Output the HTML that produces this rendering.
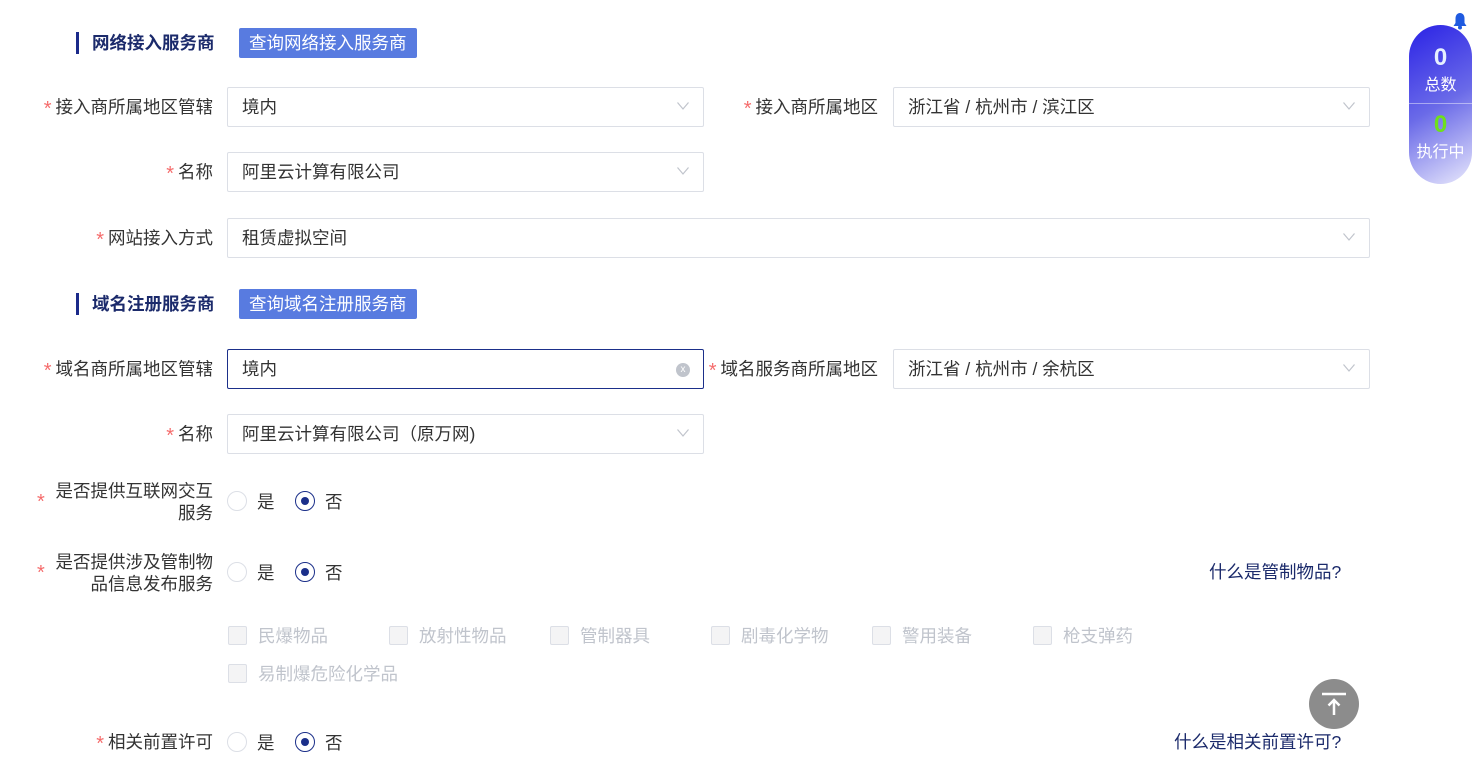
<!DOCTYPE html>
<html><head><meta charset="utf-8"><style>
*{margin:0;padding:0;box-sizing:border-box}
body{width:1475px;height:762px;background:#fff;position:relative;overflow:hidden;font-family:"Liberation Sans","Noto Sans CJK SC",sans-serif;font-size:17.5px;color:#333}
.a{position:absolute;white-space:nowrap}
.lbl{position:absolute;text-align:right;line-height:22px;color:#333}
.s{color:#f56c6c;margin-right:4px;font-size:20px;vertical-align:-2px}
.inp{position:absolute;height:40px;border:1px solid #dcdfe6;border-radius:2px;padding-left:14px;line-height:38px;color:#333}
.inp .ar{position:absolute;right:14px;top:14px;width:12px;height:8px}
.hd{position:absolute;font-weight:bold;color:#1b2a6b;font-size:17.5px;line-height:22px}
.bar{position:absolute;width:3px;height:22px;background:#1b2a8a}
.btn{position:absolute;height:30px;background:#587be0;color:#fff;border-radius:2px;line-height:30px;padding:0 10px;font-size:17.5px}
.r{position:absolute;width:20px;height:20px;border:1px solid #dcdfe6;border-radius:50%}
.r.on{border:1.5px solid #1b2f8a}
.r.on:after{content:"";position:absolute;left:4.5px;top:4.5px;width:8px;height:8px;border-radius:50%;background:#1b2f8a}
.cb{position:absolute;width:19px;height:19px;border:1px solid #dcdfe6;background:#f4f4f5;border-radius:2px}
.ct{position:absolute;color:#c0c4cc;line-height:22px}
.lk{position:absolute;color:#1b2a6b;line-height:22px}
</style></head><body>
<svg width="0" height="0" style="position:absolute"><defs><symbol id="ar" viewBox="0 0 12 8"><path d="M0.5 0.5L6 7L11.5 0.5" fill="none" stroke="#c0c4cc" stroke-width="1.2"/></symbol></defs></svg>

<div class="bar" style="left:76px;top:32px"></div>
<div class="hd" style="left:92px;top:32px">网络接入服务商</div>
<div class="btn" style="left:239px;top:28px">查询网络接入服务商</div>

<div class="lbl" style="left:20px;width:193px;top:96px"><span class="s">*</span>接入商所属地区管辖</div>
<div class="inp" style="left:227px;top:87px;width:477px">境内<svg class="ar"><use href="#ar"/></svg></div>
<div class="lbl" style="left:690px;width:188px;top:96px"><span class="s">*</span>接入商所属地区</div>
<div class="inp" style="left:893px;top:87px;width:477px">浙江省 / 杭州市 / 滨江区<svg class="ar"><use href="#ar"/></svg></div>

<div class="lbl" style="left:20px;width:193px;top:161px"><span class="s">*</span>名称</div>
<div class="inp" style="left:227px;top:152px;width:477px">阿里云计算有限公司<svg class="ar"><use href="#ar"/></svg></div>

<div class="lbl" style="left:20px;width:193px;top:227px"><span class="s">*</span>网站接入方式</div>
<div class="inp" style="left:227px;top:218px;width:1143px">租赁虚拟空间<svg class="ar"><use href="#ar"/></svg></div>

<div class="bar" style="left:76px;top:293px"></div>
<div class="hd" style="left:92px;top:293px">域名注册服务商</div>
<div class="btn" style="left:239px;top:289px">查询域名注册服务商</div>

<div class="lbl" style="left:20px;width:193px;top:358px"><span class="s">*</span>域名商所属地区管辖</div>
<div class="inp" style="left:227px;top:349px;width:477px;border-color:#1b2f8a">境内<span style="position:absolute;right:13px;top:13px;width:14px;height:14px;border-radius:50%;background:#c0c4cc;color:#fff;font-size:10px;line-height:14px;text-align:center">x</span></div>
<div class="lbl" style="left:680px;width:198px;top:358px"><span class="s">*</span>域名服务商所属地区</div>
<div class="inp" style="left:893px;top:349px;width:477px">浙江省 / 杭州市 / 余杭区<svg class="ar"><use href="#ar"/></svg></div>

<div class="lbl" style="left:20px;width:193px;top:423px"><span class="s">*</span>名称</div>
<div class="inp" style="left:227px;top:414px;width:477px">阿里云计算有限公司（原万网)<svg class="ar"><use href="#ar"/></svg></div>

<div class="s a" style="left:37px;top:491px">*</div>
<div class="lbl" style="left:40px;width:173px;top:480px">是否提供互联网交互<br>服务</div>
<div class="r" style="left:227px;top:491px"></div><div class="a" style="left:257px;top:489px">是</div>
<div class="r on" style="left:295px;top:491px"></div><div class="a" style="left:325px;top:489px">否</div>

<div class="s a" style="left:37px;top:562px">*</div>
<div class="lbl" style="left:40px;width:173px;top:551px">是否提供涉及管制物<br>品信息发布服务</div>
<div class="r" style="left:227px;top:562px"></div><div class="a" style="left:257px;top:560px">是</div>
<div class="r on" style="left:295px;top:562px"></div><div class="a" style="left:325px;top:560px">否</div>
<div class="lk" style="left:1209px;top:561px">什么是管制物品?</div>

<div class="cb" style="left:228px;top:626px"></div><div class="ct" style="left:258px;top:625px">民爆物品</div>
<div class="cb" style="left:389px;top:626px"></div><div class="ct" style="left:419px;top:625px">放射性物品</div>
<div class="cb" style="left:550px;top:626px"></div><div class="ct" style="left:580px;top:625px">管制器具</div>
<div class="cb" style="left:711px;top:626px"></div><div class="ct" style="left:741px;top:625px">剧毒化学物</div>
<div class="cb" style="left:872px;top:626px"></div><div class="ct" style="left:902px;top:625px">警用装备</div>
<div class="cb" style="left:1033px;top:626px"></div><div class="ct" style="left:1063px;top:625px">枪支弹药</div>
<div class="cb" style="left:228px;top:664px"></div><div class="ct" style="left:258px;top:663px">易制爆危险化学品</div>

<div class="lbl" style="left:20px;width:193px;top:731px"><span class="s">*</span>相关前置许可</div>
<div class="r" style="left:227px;top:732px"></div><div class="a" style="left:257px;top:730px">是</div>
<div class="r on" style="left:295px;top:732px"></div><div class="a" style="left:325px;top:730px">否</div>
<div class="lk" style="left:1174px;top:731px">什么是相关前置许可?</div>

<div class="a" style="left:1309px;top:679px;width:50px;height:50px;border-radius:50%;background:#8c8c8c">
<svg width="50" height="50" viewBox="0 0 50 50"><path d="M13 15H37" stroke="#fff" stroke-width="2.5"/><path d="M25 36V21M19.5 26.5L25 21L30.5 26.5" stroke="#fff" stroke-width="2.5" fill="none"/></svg></div>

<div class="a" style="left:1409px;top:25px;width:63px;height:159px;border-radius:32px;background:linear-gradient(150deg,#2a22e6 0%,#6a6ae8 50%,#e8e8fc 100%);color:#fff;text-align:center">
<div style="font-weight:bold;font-size:24px;color:#e6f0ff;margin-top:20px;line-height:26px">0</div>
<div style="font-size:16px;line-height:22px;margin-top:4px">总数</div>
<div style="height:1px;background:rgba(255,255,255,.45);margin-top:6px"></div>
<div style="font-weight:bold;font-size:24px;color:#6ee01c;margin-top:8px;line-height:26px">0</div>
<div style="font-size:16px;line-height:22px;margin-top:4px">执行中</div>
</div>
<svg class="a" style="left:1452px;top:12px" width="16" height="18" viewBox="0 0 16 18"><path d="M8 1C5 1 3.5 3.5 3.5 6.5V11L1.5 14H14.5L12.5 11V6.5C12.5 3.5 11 1 8 1Z" fill="#1f5ae0"/><circle cx="8" cy="15.5" r="2" fill="#1f5ae0"/></svg>
</body></html>
